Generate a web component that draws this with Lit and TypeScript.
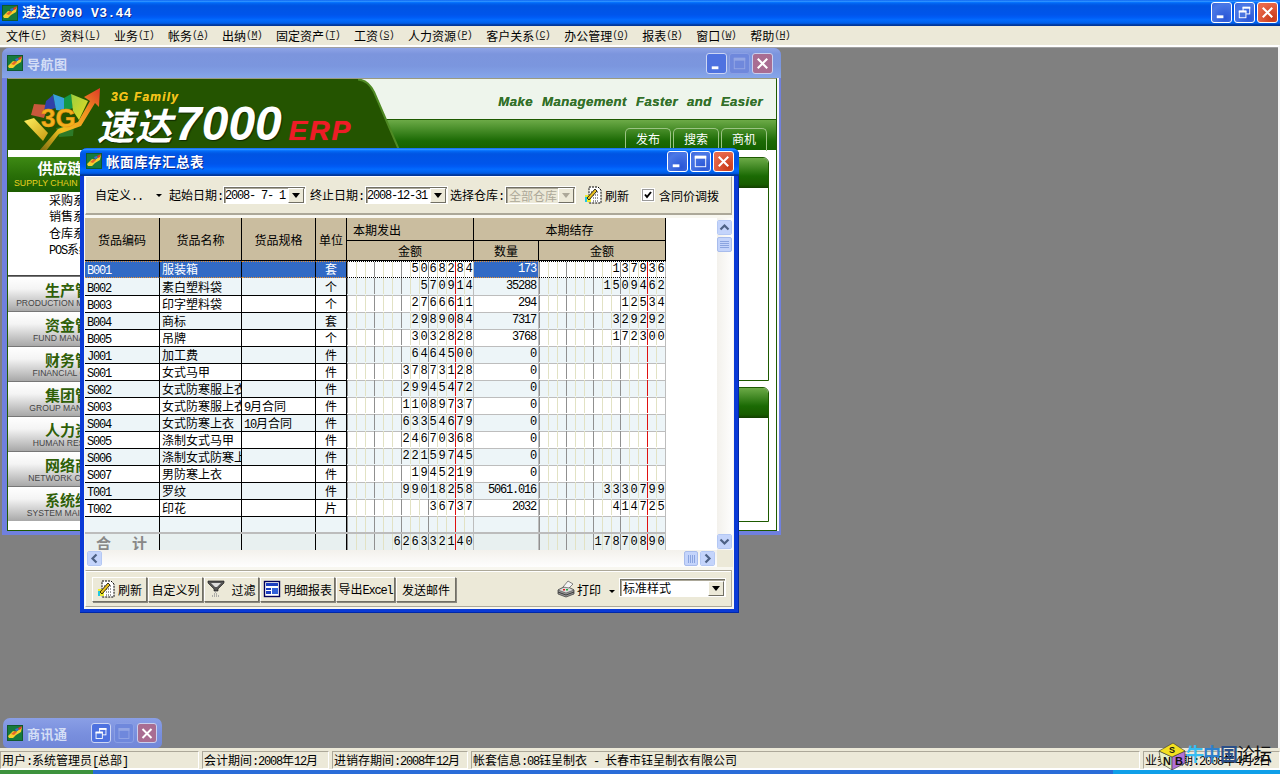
import { LitElement, html, css, svg } from "lit";
import { customElement } from "lit/decorators.js";

const t = (s: string) =>
  s.split(/([\x20-\x7e]+)/).map((p, i) => (i % 2 ? html`<span class="l">${p}</span>` : p));

const winIcon = (cls = "wicon") => html`<svg class=${cls} viewBox="0 0 16 16">
  <rect width="16" height="16" fill="#167a3e" />
  <rect x=".5" y=".5" width="15" height="15" fill="none" stroke="#0f5a2c" />
  <path d="M1 11 L6 6 L9 7 L15 2 L14 7 L9 10 L6 13 L2 13 Z" fill="#f6cf2e" />
  <path d="M4 9 L8 6 L10 7 L7 10 Z" fill="#e8662a" />
  <path d="M8 4 L11 3 L12 5 L9 6 Z" fill="#3a6fd0" />
  <path d="M11 3 L15 1 L14 4 L12 5 Z" fill="#d83a2a" />
</svg>`;

const refreshIcon = html`<svg class="ic18" viewBox="0 0 18 18">
  <path d="M5 1 H14 L17 4 V17 H5 Z" fill="#fff" stroke="#000" stroke-dasharray="2 1" />
  <path d="M7 6 h7 M7 9 h8 M9 12 h6 M9 15 h6" stroke="#333" stroke-dasharray="1 1" />
  <rect x="1" y="9" width="6" height="7" fill="#ecec30" />
  <rect x="1" y="11" width="2" height="5" fill="#22c8e0" />
  <path d="M3 12 L11 3 L13 5 L5 14 Z" fill="#e8c020" stroke="#000" stroke-width=".8" />
</svg>`;

const filterIcon = html`<svg class="ic18" viewBox="0 0 18 18">
  <path d="M1 1 H17 V3 L11 9 V11 H7 V9 L1 3 Z" fill="#555" stroke="#111" stroke-width=".6" />
  <path d="M4 3 H14 L10 7 H8 Z" fill="#ddd" />
  <path d="M8 12 h2 M7 14 h4 M5 16 h8" stroke="#999" stroke-dasharray="1 1" stroke-width="1.4" />
</svg>`;

const reportIcon = html`<svg class="ic18" viewBox="0 0 18 18">
  <rect x="1.5" y="1.5" width="15" height="15" fill="#fff" stroke="#00005a" stroke-width="1.4" />
  <rect x="3" y="3" width="12" height="3" fill="#1c3fc0" />
  <rect x="3" y="8" width="5" height="2" fill="#1c3fc0" />
  <rect x="9" y="8" width="6" height="6" fill="#3060d8" />
  <rect x="3" y="11" width="5" height="3" fill="#1c3fc0" />
</svg>`;

const printIcon = html`<svg class="ic18" viewBox="0 0 18 18">
  <path d="M1 10 L9 6 L17 10 V14 L9 17 L1 14 Z" fill="#9a9a9a" stroke="#333" stroke-width=".7" />
  <path d="M1 10 L9 13 L17 10 L9 6 Z" fill="#dcdcdc" stroke="#444" stroke-width=".6" />
  <path d="M6 7 L11 1 L16 4 L12 8 Z" fill="#f4f4f4" stroke="#555" stroke-width=".7" />
  <rect x="6" y="9" width="2" height="1.5" fill="#e02020" />
  <rect x="9" y="9" width="2" height="1.5" fill="#20b040" />
  <path d="M1 12 L9 15 L17 12" fill="none" stroke="#222" stroke-width=".8" />
</svg>`;

const chevron = (d: string) => html`<svg class="chev" viewBox="0 0 11 11">
  <path d=${d} fill="none" stroke="#4d6185" stroke-width="2.2" />
</svg>`;

const capBtn = (kind: string, cls = "") => html`<span class="cap ${cls}">
  <svg viewBox="0 0 20 20">
    ${kind === "min" ? svg`<rect x="5" y="13" width="7" height="3" fill="#fff" />` : ""}
    ${kind === "max"
      ? svg`<rect x="4.5" y="4.5" width="11" height="11" fill="none" stroke="#fff" /><rect x="4" y="4" width="12" height="3" fill="#fff" />`
      : ""}
    ${kind === "rest"
      ? svg`<rect x="8.5" y="4.5" width="7" height="7" fill="none" stroke="#fff" /><rect x="8" y="4" width="8" height="2" fill="#fff" /><rect x="4.5" y="8.5" width="7" height="7" fill="#4a74e0" stroke="#fff" /><rect x="4" y="8" width="8" height="2" fill="#fff" />`
      : ""}
    ${kind === "close" ? svg`<path d="M5 5 L15 15 M15 5 L5 15" stroke="#fff" stroke-width="2.2" />` : ""}
  </svg>
</span>`;

const menus: [string, string][] = [
  ["文件", "F"], ["资料", "L"], ["业务", "T"], ["帐务", "A"], ["出纳", "M"], ["固定资产", "T"],
  ["工资", "S"], ["人力资源", "P"], ["客户关系", "C"], ["办公管理", "O"], ["报表", "R"],
  ["窗口", "W"], ["帮助", "H"],
];

const side: [string, string][] = [
  ["生产管理", "PRODUCTION MANAGEMENT"], ["资金管理", "FUND MANAGEMENT"], ["财务管理", "FINANCIAL CONTROL"],
  ["集团管理", "GROUP MANAGEMENT"], ["人力资源", "HUMAN RESOURCES"], ["网络商务", "NETWORK COMMERCE"],
  ["系统维护", "SYSTEM MAINTENANCE"],
];

const rows: [string, string, string, string, string, string, string][] = [
  ["B001", "服装箱", "", "套", "5068284", "173", "137936"],
  ["B002", "素白塑料袋", "", "个", "570914", "35288", "1509462"],
  ["B003", "印字塑料袋", "", "个", "2766611", "294", "12534"],
  ["B004", "商标", "", "套", "2989084", "7317", "329292"],
  ["B005", "吊牌", "", "个", "3032828", "3768", "172300"],
  ["J001", "加工费", "", "件", "6464500", "0", ""],
  ["S001", "女式马甲", "", "件", "37873128", "0", ""],
  ["S002", "女式防寒服上衣", "", "件", "29945472", "0", ""],
  ["S003", "女式防寒服上衣", "9月合同", "件", "11089737", "0", ""],
  ["S004", "女式防寒上衣", "10月合同", "件", "63354679", "0", ""],
  ["S005", "涤制女式马甲", "", "件", "24670368", "0", ""],
  ["S006", "涤制女式防寒上衣", "", "件", "22159745", "0", ""],
  ["S007", "男防寒上衣", "", "件", "1945219", "0", ""],
  ["T001", "罗纹", "", "件", "99018258", "5061.016", "3330799"],
  ["T002", "印花", "", "片", "36737", "2032", "414725"],
];

const lineClass = (k: number) => (k === 12 ? "red" : k % 3 === 0 ? "gry" : "");

const amount = (v: string) => {
  const pad = v.padStart(14, " ");
  return html`<div class="amt">
    ${[...pad].map(
      (ch, k) => html`<span class="dg ${lineClass(k)}">${ch.trim()}</span>`
    )}
  </div>`;
};

@customElement("app-root")
export class AppRoot extends LitElement {
  static styles = css`
    :host {
      display: flex;
      flex-direction: column;
      width: 1280px;
      height: 774px;
      overflow: hidden;
      position: relative;
      font: 12px "Noto Sans CJK SC", "Liberation Sans", sans-serif;
      color: #000;
      background: #808080;
      --xp: linear-gradient(#0058ee 0%, #3593ff 4%, #288eff 6%, #127dff 8%, #036ffc 10%, #0262ee 14%, #0057e5 20%, #0054e3 24%, #0055eb 56%, #005bf5 66%, #026afe 76%, #0062ef 86%, #0052d6 92%, #0040ab 94%, #003092 100%);
    }
    * { box-sizing: border-box; }
    .l { font-family: "Liberation Mono", monospace; font-size: 12px; letter-spacing: -1.2px; white-space: pre; }
    .wicon { width: 16px; height: 16px; flex: none; display: block; }
    .ic18 { width: 18px; height: 18px; flex: none; display: block; }
    .chev { width: 11px; height: 11px; display: block; }

    /* caption buttons */
    .cap {
      width: 21px; height: 21px; flex: none; border: 1px solid #fff; border-radius: 3px;
      background: radial-gradient(circle at 70% 80%, #2a56d6, #4a78e6 70%, #3b64dc);
      display: flex; align-items: center; justify-content: center;
    }
    .cap svg { width: 19px; height: 19px; display: block; }
    .cap.close { background: radial-gradient(circle at 75% 80%, #c93a18, #e8684a 75%); }
    .cap.dmin { background: #4e72e0; border-color: #cdd6f4; }
    .cap.dmax { background: #6f88dc; border-color: #8a9fe4; opacity: 1; }
    .cap.dmax svg { opacity: .25; }
    .cap.dclose { background: #a96d92; border-color: #c9cfee; }

    /* main frame */
    .app-title {
      height: 26px; flex: none; background: var(--xp); display: flex; align-items: center;
      padding: 0 2px 1px 2px; color: #fff;
    }
    .app-name { margin-left: 4px; margin-top: -3px; font-weight: 700; font-size: 14px; line-height: 26px; text-shadow: 1px 1px 0 #0a2a90; }
    .app-name span { font: 700 13px "Liberation Mono", monospace; letter-spacing: .4px; white-space: pre; }
    .app-caps { margin-left: auto; display: flex; gap: 2px; }
    .menubar { height: 19px; flex: none; background: #ece9d8; display: flex; gap: 14px; padding-left: 6px; align-items: center; line-height: 19px; }
    .mi { display: flex; align-items: center; }
    .mi u { width: 16px; text-align: center; font: 10px "Liberation Mono", monospace; letter-spacing: -.7px; text-decoration: none; color: #222; white-space: pre; }
    .mi u b { font-weight: 400; text-decoration: underline; }
    .mdi { flex: 1; position: relative; background: #808080; border-top: 2px solid #fff; box-shadow: inset 0 1px 0 #a0a0a0; border-right: 2px solid #f4f4f4; }

    /* nav window */
    .nav {
      position: absolute; left: 2px; top: 1px; width: 779px; height: 487px;
      background: #7080de; border-radius: 7px 7px 0 0; padding: 0 5px 5px 5px;
      display: flex; flex-direction: column; overflow: hidden;
    }
    .in-title {
      height: 30px; flex: none; margin: 0 -5px; padding: 0 5px 0 5px;
      background: linear-gradient(#8ea4e6 0%, #7c95dd 20%, #7b96de 60%, #86a6ea 100%);
      display: flex; align-items: center; color: #d4def6; font-weight: 700; font-size: 13px;
    }
    .in-title .name { margin-left: 4px; letter-spacing: .5px; }
    .in-title .caps { margin-left: auto; display: flex; gap: 2px; margin-right: 3px; }
    .nav-body { flex: 1; background: #f6fbf6; border: 1px solid #1d5a00; border-top: 1px solid #9a9a80; border-left: 1px solid #1d5a00; box-shadow: 2px 0 0 #f4f4ff; margin-right: -1px; display: flex; flex-direction: column; }
    .banner { height: 71px; flex: none; position: relative; }
    .ban-top { height: 40px; background: #eef5ec; display: flex; justify-content: flex-end; align-items: center; padding: 4px 13px 0 0; }
    .tag { font: italic 700 13.2px "Liberation Sans", sans-serif; color: #33702a; letter-spacing: .42px; word-spacing: 5px; white-space: pre; text-shadow: 0 0 .6px #33702a; }
    .ban-band { height: 31px; background: linear-gradient(#6caa47, #1b6a04 70%, #146000); border-top: 1px solid #1d5a00; display: flex; justify-content: flex-end; gap: 2px; padding: 8px 9px 0 0; }
    .tab { width: 46px; height: 23px; border: 1px solid #9cc484; border-bottom: 0; border-radius: 5px 5px 0 0; color: #fff; text-align: center; line-height: 19px; }
    .shape { position: absolute; left: 0; top: 0; width: 400px; height: 71px; display: block; }
    .lockup { position: absolute; left: 89px; top: 11px; display: flex; flex-direction: column; color: #fff; }
    .fam { margin-left: 14px; font: italic 700 12px "Liberation Sans", sans-serif; color: #f2c21a; letter-spacing: 1.2px; line-height: 14px; text-shadow: 0 0 .6px #f2c21a; }
    .big { display: flex; align-items: baseline; height: 40px; margin-top: 0; white-space: nowrap; }
    .big .cn { font: italic 700 37px "Noto Sans CJK SC", sans-serif; line-height: 40px; width: 78px; text-shadow: 1px 1px 1px #102800; letter-spacing: 1px; }
    .big .num { font: italic 700 48px "Liberation Sans", sans-serif; line-height: 40px; text-shadow: 1px 1px 1px #102800; }
    .big .erp { font: italic 700 28px "Liberation Sans", sans-serif; color: #ee1c26; margin-left: 7px; letter-spacing: 2px; text-shadow: 0 0 .8px #ee1c26; }

    .nav-main { flex: 1; display: flex; padding: 7px 7px 8px 0; justify-content: space-between; background: #fff; border-top: 0; min-height: 0; }
    .side { width: 138px; display: flex; flex-direction: column; overflow: hidden; }
    .side-h { height: 35px; flex: none; background: linear-gradient(#3e8a14, #2a7008 50%, #1c5c00); color: #fff; text-align: center; padding-top: 1px; }
    .side-h b { display: block; font-size: 15px; line-height: 20px; padding-right: 4px; }
    .side-h i { display: block; font: 8.8px "Liberation Sans", sans-serif; color: #e8d020; line-height: 11px; white-space: nowrap; text-align: left; padding-left: 6px; }
    .side-list { height: 84px; flex: none; padding: 0 0 0 41px; line-height: 16.4px; border-bottom: 1px solid #444; }
    .sb { height: 35px; flex: none; background: linear-gradient(#fff, #f4f4f4 35%, #a8a8a8); text-align: center; border-top: 1px solid #777; padding-top: 4px; overflow: hidden; }
    .sb b { display: block; font-size: 15px; line-height: 17px; color: #2f5f08; padding-right: 4px; }
    .sb i { display: block; font: normal 8.6px "Liberation Sans", sans-serif; color: #444; line-height: 10px; white-space: nowrap; }
    .panels { width: 200px; display: flex; flex-direction: column; gap: 6px; }
    .panel { border: 1px solid #1d5a00; background: #fff; border-radius: 0 6px 0 0; display: flex; flex-direction: column; }
    .panel.a { height: 224px; }
    .panel.b { height: 135px; }
    .panel-h { height: 30px; background: linear-gradient(#6caa47, #1b6a04 60%, #185c00 88%, #123e00); border-radius: 0 5px 0 0; }

    /* report window */
    .rep {
      position: absolute; left: 80px; top: 101px; width: 659px; height: 465px;
      background: #0a3ad6; border-radius: 7px 7px 0 0; padding: 0 5px 4px 4px;
      display: flex; flex-direction: column; box-shadow: inset 0 -1px 0 #0028a8, inset -1px 0 0 #0028a8;
    }
    .rep-title {
      height: 28px; flex: none; margin: 0 -5px 0 -4px; padding: 0 5px 2px 6px; background: var(--xp); border-radius: 7px 7px 0 0;
      display: flex; align-items: center; color: #fff; font-weight: 700; font-size: 13.5px;
    }
    .rep-title .name { margin-left: 4px; letter-spacing: .5px; text-shadow: 1px 1px 0 #0a2a90; }
    .rep-title .caps { margin-left: auto; display: flex; gap: 2px; }
    .rep-title .cap { width: 21px; height: 21px; }
    .rep-body { flex: 1; background: #f8f7f0; display: flex; flex-direction: column; padding: 0 2px 2px 1px; min-height: 0; }
    .panelbar { background: #ece9d8; border: 1px solid #fff; border-bottom-color: #aca899; border-right-color: #aca899; flex: none; display: flex; align-items: center; }
    .tbar { height: 39px; padding-left: 9px; border-top-color: #fff; border-bottom: 2px solid #aca899; }
    .dd { width: 74px; display: flex; align-items: center; justify-content: space-between; padding-right: 7px; }
    .ar { width: 0; height: 0; border: 3px solid transparent; border-top: 3px solid #000; border-bottom: 0; flex: none; }
    .lab { flex: none; }
    .combo { height: 18px; background: #fff; border: 1px solid #fff; box-shadow: inset 1px 1px 0 #716f64, inset 2px 2px 0 #aca899; display: flex; align-items: center; padding: 1px 1px 0 1px; justify-content: space-between; flex: none; }
    .combo.date { width: 83px; }
    .combo.dis { width: 71px; background: #ece9d8; color: #aca899; margin-left: 1px; padding-left: 3px; }
    .cbtn { width: 16px; height: 15px; background: #ece9d8; border: 1px solid; border-color: #fff #716f64 #716f64 #fff; display: flex; align-items: center; justify-content: center; flex: none; }
    .cbtn .ar { border-width: 5px; border-bottom: 0; border-left-width: 4px; border-right-width: 4px; }
    .dis .ar { border-top-color: #aca899; }
    .ml4 { margin-left: 4px; }
    .ml5 { margin-left: 5px; }
    .ml1 { margin-left: 1px; }
    .ml2 { margin-left: 2px; }
    .ml8 { margin-left: 8px; }
    .ml3 { margin-left: 3px; }
    .chk { width: 12px; height: 12px; background: #fff; border: 1px solid #999; box-shadow: 0 0 0 1px #fff; flex: none; margin-left: 13px; display: block; }
    .chk svg { display: block; width: 10px; height: 10px; }

    .gridwrap { flex: none; margin-top: 3px; height: 349px; display: grid; grid-template-columns: 632px 16px; grid-template-rows: 332px 17px; background: #fff; }
    .vp { height: 332px; overflow: hidden; }
    .ghead { display: grid; width: 581px; grid-template-columns: 75px 82px 74px 31px 127px 65px 127px; grid-template-rows: 23px 20px; background: #cabd9f; }
    .gh { display: flex; align-items: center; justify-content: center; border-right: 1px solid #000; border-bottom: 1px solid #000; }
    .gh.span2 { grid-row: span 2; }
    .gh.left { justify-content: flex-start; padding-left: 6px; }
    .gh.wide { grid-column: span 2; }
    .row { display: grid; width: 581px; grid-template-columns: 75px 82px 74px 31px 127px 65px 127px; height: 17px; line-height: 17px; }
    .row.odd { background: #fff; }
    .row.even { background: #edf5f8; }
    .c { border-right: 1px solid #000; border-bottom: 1px solid #000; padding-left: 2px; overflow: hidden; white-space: nowrap; }
    .c.u { text-align: center; padding: 0; }
    .amt { display: flex; border-bottom: 1px solid #bdbdbd; border-right: 1px solid #bdbdbd; }
    .dg { width: 9px; height: 16px; flex: none; border-left: 1px solid #e2e2c4; text-align: center; font: 12px/17px "Liberation Mono", monospace; overflow: hidden; }
    .dg.gry { border-left-color: #909090; }
    .dg.red { border-left-color: #e01010; }
    .q { border-right: 1px solid #bdbdbd; border-bottom: 1px solid #bdbdbd; text-align: right; padding-right: 2px; font: 12px/17px "Liberation Mono", monospace; letter-spacing: -1.2px; white-space: pre; }
    .row.sel .c { background: #316ac5; color: #fff; border-bottom: 1px dotted #e89030; border-top: 1px dotted #e89030; line-height: 14px; }
    .row.sel .q { background: #316ac5; color: #fff; border-bottom: 1px dotted #e89030; border-top: 1px dotted #e89030; line-height: 14px; }
    .row.sel .amt { background: #fff; border-top: 1px dotted #000; border-bottom: 1px dotted #000; }
    .row.sel .dg { height: 15px; line-height: 15px; }
    .row.blank { height: 16px; }
    .row.blank .c, .row.blank .amt, .row.blank .q { border-bottom: 0; }
    .row.total { background: #e8f0f0; border-top: 2px solid #bcbcbc; height: 19px; }
    .row.total .c, .row.total .q, .row.total .amt { border-bottom: 0; }
    .row.total .dg { height: 17px; }
    .hj { color: #888; font-weight: 700; font-size: 15px; line-height: 17px; display: flex; justify-content: space-between; padding: 0 12px 0 11px; }
    .vs { background: linear-gradient(90deg, #f3f1ec, #fefefe); display: flex; flex-direction: column; align-items: center; padding: 2px 1px 0 0; }
    .sbb { width: 15px; height: 15px; background: #c4d4fb; border: 1px solid #fff; outline: 1px solid #b4c8f4; outline-offset: -1px; border-radius: 2px; display: flex; align-items: center; justify-content: center; flex: none; }
    .vthumb { margin-top: 2px; width: 15px; height: 15px; background: #c4d4fb; border: 1px solid #a8bcec; border-radius: 2px; display: flex; flex-direction: column; gap: 1px; align-items: center; justify-content: center; }
    .vthumb i { width: 9px; height: 1px; background: #8aa4e0; display: block; }
    .vs .sp { flex: 1; }
    .vs .end { margin-bottom: 1px; }
    .hs { background: linear-gradient(#f3f1ec, #fefefe); display: flex; align-items: center; padding: 0 2px 0 2px; }
    .hs .sp { flex: 1; }
    .hthumb { width: 14px; height: 15px; background: #c4d4fb; border: 1px solid #a8bcec; border-radius: 2px; display: flex; gap: 1px; align-items: center; justify-content: center; margin-right: 2px; }
    .hthumb i { width: 1px; height: 8px; background: #8aa4e0; display: block; }
    .corner { background: #ece9d8; }
    .bbar { margin-top: 3px; height: 37px; padding: 1px 5px 0 6px; border-top: 1px solid #aca899; box-shadow: inset 0 1px 0 #fff; }
    .btn { height: 25px; background: #ece9d8; border: 1px solid; border-color: #fff #716f64 #716f64 #fff; box-shadow: 1px 1px 0 #8a8880; display: flex; align-items: center; justify-content: center; gap: 3px; flex: none; margin-right: 1px; white-space: nowrap; }
    .w55 { width: 55px; }
    .w75 { width: 75px; }
    .w59 { width: 59px; }
    .w60 { width: 60px; }
    .bsp { flex: 1; }
    .arw { margin: 4px 4px 0 8px; }
    .sel2 { width: 107px; height: 19px; margin-top: -4px; align-items: flex-start; padding: 0 1px 0 3px; line-height: 17px; }
    .sel2 .cbtn { margin-top: 2px; width: 16px; }

    /* minimized */
    .mini {
      position: absolute; left: 3px; top: 671px; width: 159px; height: 30px; background: linear-gradient(#8a9fe6, #7a90de 50%, #7086d8);
      border-radius: 7px 7px 5px 5px; display: flex; align-items: center; padding: 0 5px 0 4px; color: #d4def6; font-weight: 700; font-size: 13px;
    }
    .mini .name { margin-left: 4px; letter-spacing: .5px; }
    .mini .caps { margin-left: auto; display: flex; gap: 3px; }
    .mini .cap { width: 20px; height: 20px; }

    /* status + taskbar */
    .status { height: 21px; flex: none; background: #ece9d8; padding-top: 3px; display: flex; gap: 3px; }
    .sc { height: 18px; border: 1px solid; border-color: #aca899 #fff #fff #aca899; line-height: 16px; padding-left: 1px; white-space: nowrap; overflow: hidden; flex: none; }
    .s0 { width: 199px; }
    .s1 { width: 127px; }
    .s2 { width: 136px; }
    .s3 { width: 669px; }
    .s4 { width: 137px; }
    .task { height: 5px; flex: none; background: #2a6cd8; border-top: 1px solid #fff; display: flex; justify-content: space-between; }
    .task .g { width: 93px; background: #3d923d; }
    .task .tr { width: 167px; background: #0f9fe8; }

    .mark { position: absolute; left: 1158px; top: 742px; display: flex; align-items: flex-start; pointer-events: none; }
    .mark svg { width: 28px; height: 28px; display: block; }
    .mark .wm { font-size: 18px; line-height: 22px; letter-spacing: -1px; white-space: nowrap; }
    .wm .w1, .wm .w2, .wm .w3 { font-weight: 700; }
    .wm .w1 { color: #36bdf2; }
    .wm .w2 { color: #2f80cc; }
    .wm .w3 { color: #2a4f88; }
    .wm .w4 { color: #111; }
  `;

  private dataRow(r: (typeof rows)[number], i: number) {
    const cls = i === 0 ? "sel odd" : i % 2 ? "even" : "odd";
    return html`<div class="row ${cls}">
      <div class="c">${t(r[0])}</div>
      <div class="c">${t(r[1])}</div>
      <div class="c">${t(r[2])}</div>
      <div class="c u">${r[3]}</div>
      ${amount(r[4])}
      <div class="q">${r[5]}</div>
      ${amount(r[6])}
    </div>`;
  }

  render() {
    return html`
      <div class="app-title">
        ${winIcon()}
        <div class="app-name">速达<span>7000 V3.44</span></div>
        <div class="app-caps">${capBtn("min")}${capBtn("rest")}${capBtn("close", "close")}</div>
      </div>
      <div class="menubar">
        ${menus.map(([a, k]) => html`<div class="mi">${a}<u>(<b>${k}</b>)</u></div>`)}
      </div>
      <div class="mdi">
        <div class="nav">
          <div class="in-title">
            ${winIcon()}<span class="name">导航图</span>
            <span class="caps">${capBtn("min", "dmin")}${capBtn("max", "dmax")}${capBtn("close", "dclose")}</span>
          </div>
          <div class="nav-body">
            <div class="banner">
              <div class="ban-top"><span class="tag">Make Management Faster and Easier</span></div>
              <div class="ban-band">
                <span class="tab">发布</span><span class="tab">搜索</span><span class="tab">商机</span>
              </div>
              <svg class="shape" viewBox="0 0 400 71">
                <defs>
                  <linearGradient id="arrow" x1="0" y1="1" x2="1" y2="0">
                    <stop offset="0" stop-color="#7a6a10" />
                    <stop offset=".35" stop-color="#f0c020" />
                    <stop offset=".7" stop-color="#f09020" />
                    <stop offset="1" stop-color="#e03a28" />
                  </linearGradient>
                  <linearGradient id="wedge" x1="0" y1="0" x2="1" y2="1">
                    <stop offset="0" stop-color="#fff060" />
                    <stop offset="1" stop-color="#c89a10" />
                  </linearGradient>
                  <linearGradient id="lime" x1="0" y1="0" x2="1" y2="1">
                    <stop offset="0" stop-color="#98d040" />
                    <stop offset="1" stop-color="#ecd820" />
                  </linearGradient>
                </defs>
                <path d="M0 0 H350 Q360 1 366 13 L391 71 H0 Z" fill="#245400" />
                <path d="M350 0.5 Q360 1 366 13 L391 71" fill="none" stroke="#4f8a24" stroke-width="2" />
                <path d="M48 49 L66 46 L65 57 L51 58 Z" fill="#2d7a28" />
                <path d="M26 25 L40 26 L36 39 L23 36 Z" fill="#c8583c" />
                <path d="M38 22 L45 16 L48 29 L36 32 Z" fill="#3040a8" />
                <path d="M45 15 L56 19 L56 32 L48 31 Z" fill="#38a0dc" />
                <path d="M56 19 L63 15 L65 29 L56 32 Z" fill="#149848" />
                <path d="M63 15 L80 22 L71 41 L65 32 Z" fill="url(#lime)" />
                <path d="M16 42 L26 39 L40 54 L35 62 Z" fill="url(#wedge)" />
                <path d="M92 9 L76 18 L82 22 L70 43 L50 50 L31 72 H38 L51 55 L73 47 L87 24 L91 28 Z" fill="url(#arrow)" />
                <text x="33" y="48" font-family="Liberation Sans" font-weight="700" font-size="26" fill="#f4b01c" stroke="#e89018" stroke-width=".5">3G</text>
              </svg>
              <div class="lockup">
                <div class="fam">3G Family</div>
                <div class="big"><span class="cn">速达</span><span class="num">7000</span><span class="erp">ERP</span></div>
              </div>
            </div>
            <div class="nav-main">
              <div class="side">
                <div class="side-h"><b>供应链管理</b><i>SUPPLY CHAIN MANAGEMENT</i></div>
                <div class="side-list">采购系统<br />销售系统<br />仓库系统<br />${t("POS")}系统</div>
                ${side.map(([a, b]) => html`<div class="sb"><b>${a}</b><i>${b}</i></div>`)}
              </div>
              <div class="panels">
                <div class="panel a"><div class="panel-h"></div></div>
                <div class="panel b"><div class="panel-h"></div></div>
              </div>
            </div>
          </div>
        </div>

        <div class="mini">
          ${winIcon()}<span class="name">商讯通</span>
          <span class="caps">${capBtn("rest", "dmin")}${capBtn("max", "dmax")}${capBtn("close", "dclose")}</span>
        </div>

        <div class="rep">
          <div class="rep-title">
            ${winIcon()}<span class="name">帐面库存汇总表</span>
            <span class="caps">${capBtn("min")}${capBtn("max")}${capBtn("close", "close")}</span>
          </div>
          <div class="rep-body">
            <div class="panelbar tbar">
              <div class="dd"><span>${t("自定义..")}</span><span class="ar"></span></div>
              <span class="lab">${t("起始日期:")}</span>
              <div class="combo date"><span class="l">2008- 7- 1</span><span class="cbtn"><span class="ar"></span></span></div>
              <span class="lab ml4">${t("终止日期:")}</span>
              <div class="combo date ml1"><span class="l">2008-12-31</span><span class="cbtn"><span class="ar"></span></span></div>
              <span class="lab ml2">${t("选择仓库:")}</span>
              <div class="combo dis">全部仓库<span class="cbtn"><span class="ar"></span></span></div>
              <span class="ml8">${refreshIcon}</span>
              <span class="lab ml3">刷新</span>
              <span class="chk"><svg viewBox="0 0 10 10"><path d="M2 4.5 L4 7 L8 2" fill="none" stroke="#000" stroke-width="2" /></svg></span>
              <span class="lab ml5">含同价调拨</span>
            </div>
            <div class="gridwrap">
              <div class="vp">
                <div class="ghead">
                  <div class="gh span2">货品编码</div>
                  <div class="gh span2">货品名称</div>
                  <div class="gh span2">货品规格</div>
                  <div class="gh span2">单位</div>
                  <div class="gh left">本期发出</div>
                  <div class="gh wide">本期结存</div>
                  <div class="gh">金额</div>
                  <div class="gh">数量</div>
                  <div class="gh">金额</div>
                </div>
                ${rows.map((r, i) => this.dataRow(r, i))}
                <div class="row even blank">
                  <div class="c"></div><div class="c"></div><div class="c"></div><div class="c"></div>
                  ${amount("")}<div class="q"></div>${amount("")}
                </div>
                <div class="row total">
                  <div class="c hj"><span>合</span><span>计</span></div>
                  <div class="c"></div><div class="c"></div><div class="c"></div>
                  ${amount("626332140")}<div class="q"></div>${amount("17870890")}
                </div>
              </div>
              <div class="vs">
                <span class="sbb">${chevron("M1.5 7.5 L5.5 3.5 L9.5 7.5")}</span>
                <span class="vthumb"><i></i><i></i><i></i><i></i></span>
                <span class="sp"></span>
                <span class="sbb end">${chevron("M1.5 3.5 L5.5 7.5 L9.5 3.5")}</span>
              </div>
              <div class="hs">
                <span class="sbb">${chevron("M7.5 1.5 L3.5 5.5 L7.5 9.5")}</span>
                <span class="sp"></span>
                <span class="hthumb"><i></i><i></i><i></i><i></i></span>
                <span class="sbb">${chevron("M3.5 1.5 L7.5 5.5 L3.5 9.5")}</span>
              </div>
              <div class="corner"></div>
            </div>
            <div class="panelbar bbar">
              <div class="btn w55">${refreshIcon}<span>刷新</span></div>
              <div class="btn w55">自定义列</div>
              <div class="btn w55">${filterIcon}<span class="ml3">过滤</span></div>
              <div class="btn w75">${reportIcon}<span>明细报表</span></div>
              <div class="btn w59"><span>${t("导出Excel")}</span></div>
              <div class="btn w60">发送邮件</div>
              <span class="bsp"></span>
              ${printIcon}<span class="lab ml2">打印</span><span class="ar arw"></span>
              <div class="combo sel2">标准样式<span class="cbtn"><span class="ar"></span></span></div>
            </div>
          </div>
        </div>
      </div>
      <div class="status">
        <div class="sc s0">${t("用户:系统管理员[总部]")}</div>
        <div class="sc s1">${t("会计期间:2008年12月")}</div>
        <div class="sc s2">${t("进销存期间:2008年12月")}</div>
        <div class="sc s3">${t("帐套信息:08钰呈制衣 - 长春市钰呈制衣有限公司")}</div>
        <div class="sc s4">${t("业务日期:2008年4月2日")}</div>
      </div>
      <div class="task"><span class="g"></span><span class="tr"></span></div>
      <div class="mark">
        <svg viewBox="0 0 28 28">
          <path d="M1 9 L14 15 V28 L3 21 Z" fill="#e8f0c0" stroke="#333" stroke-width=".6" />
          <path d="M14 15 L27 9 V21 L14 28 Z" fill="#b070d8" stroke="#333" stroke-width=".6" />
          <path d="M1 9 L15 1 L27 9 L14 15 Z" fill="#f4e020" stroke="#333" stroke-width=".6" />
          <text x="5" y="23" font-family="Liberation Sans" font-weight="700" font-size="11" fill="#111">N</text>
          <text x="17" y="23" font-family="Liberation Sans" font-weight="700" font-size="11" fill="#111">B</text>
          <text x="11" y="11" font-family="Liberation Sans" font-weight="700" font-size="9" fill="#111">S</text>
        </svg>
        <div class="wm"><span class="w1">牛</span><span class="w2">中</span><span class="w3">国</span><span class="w4">论坛</span></div>
      </div>
    `;
  }
}
